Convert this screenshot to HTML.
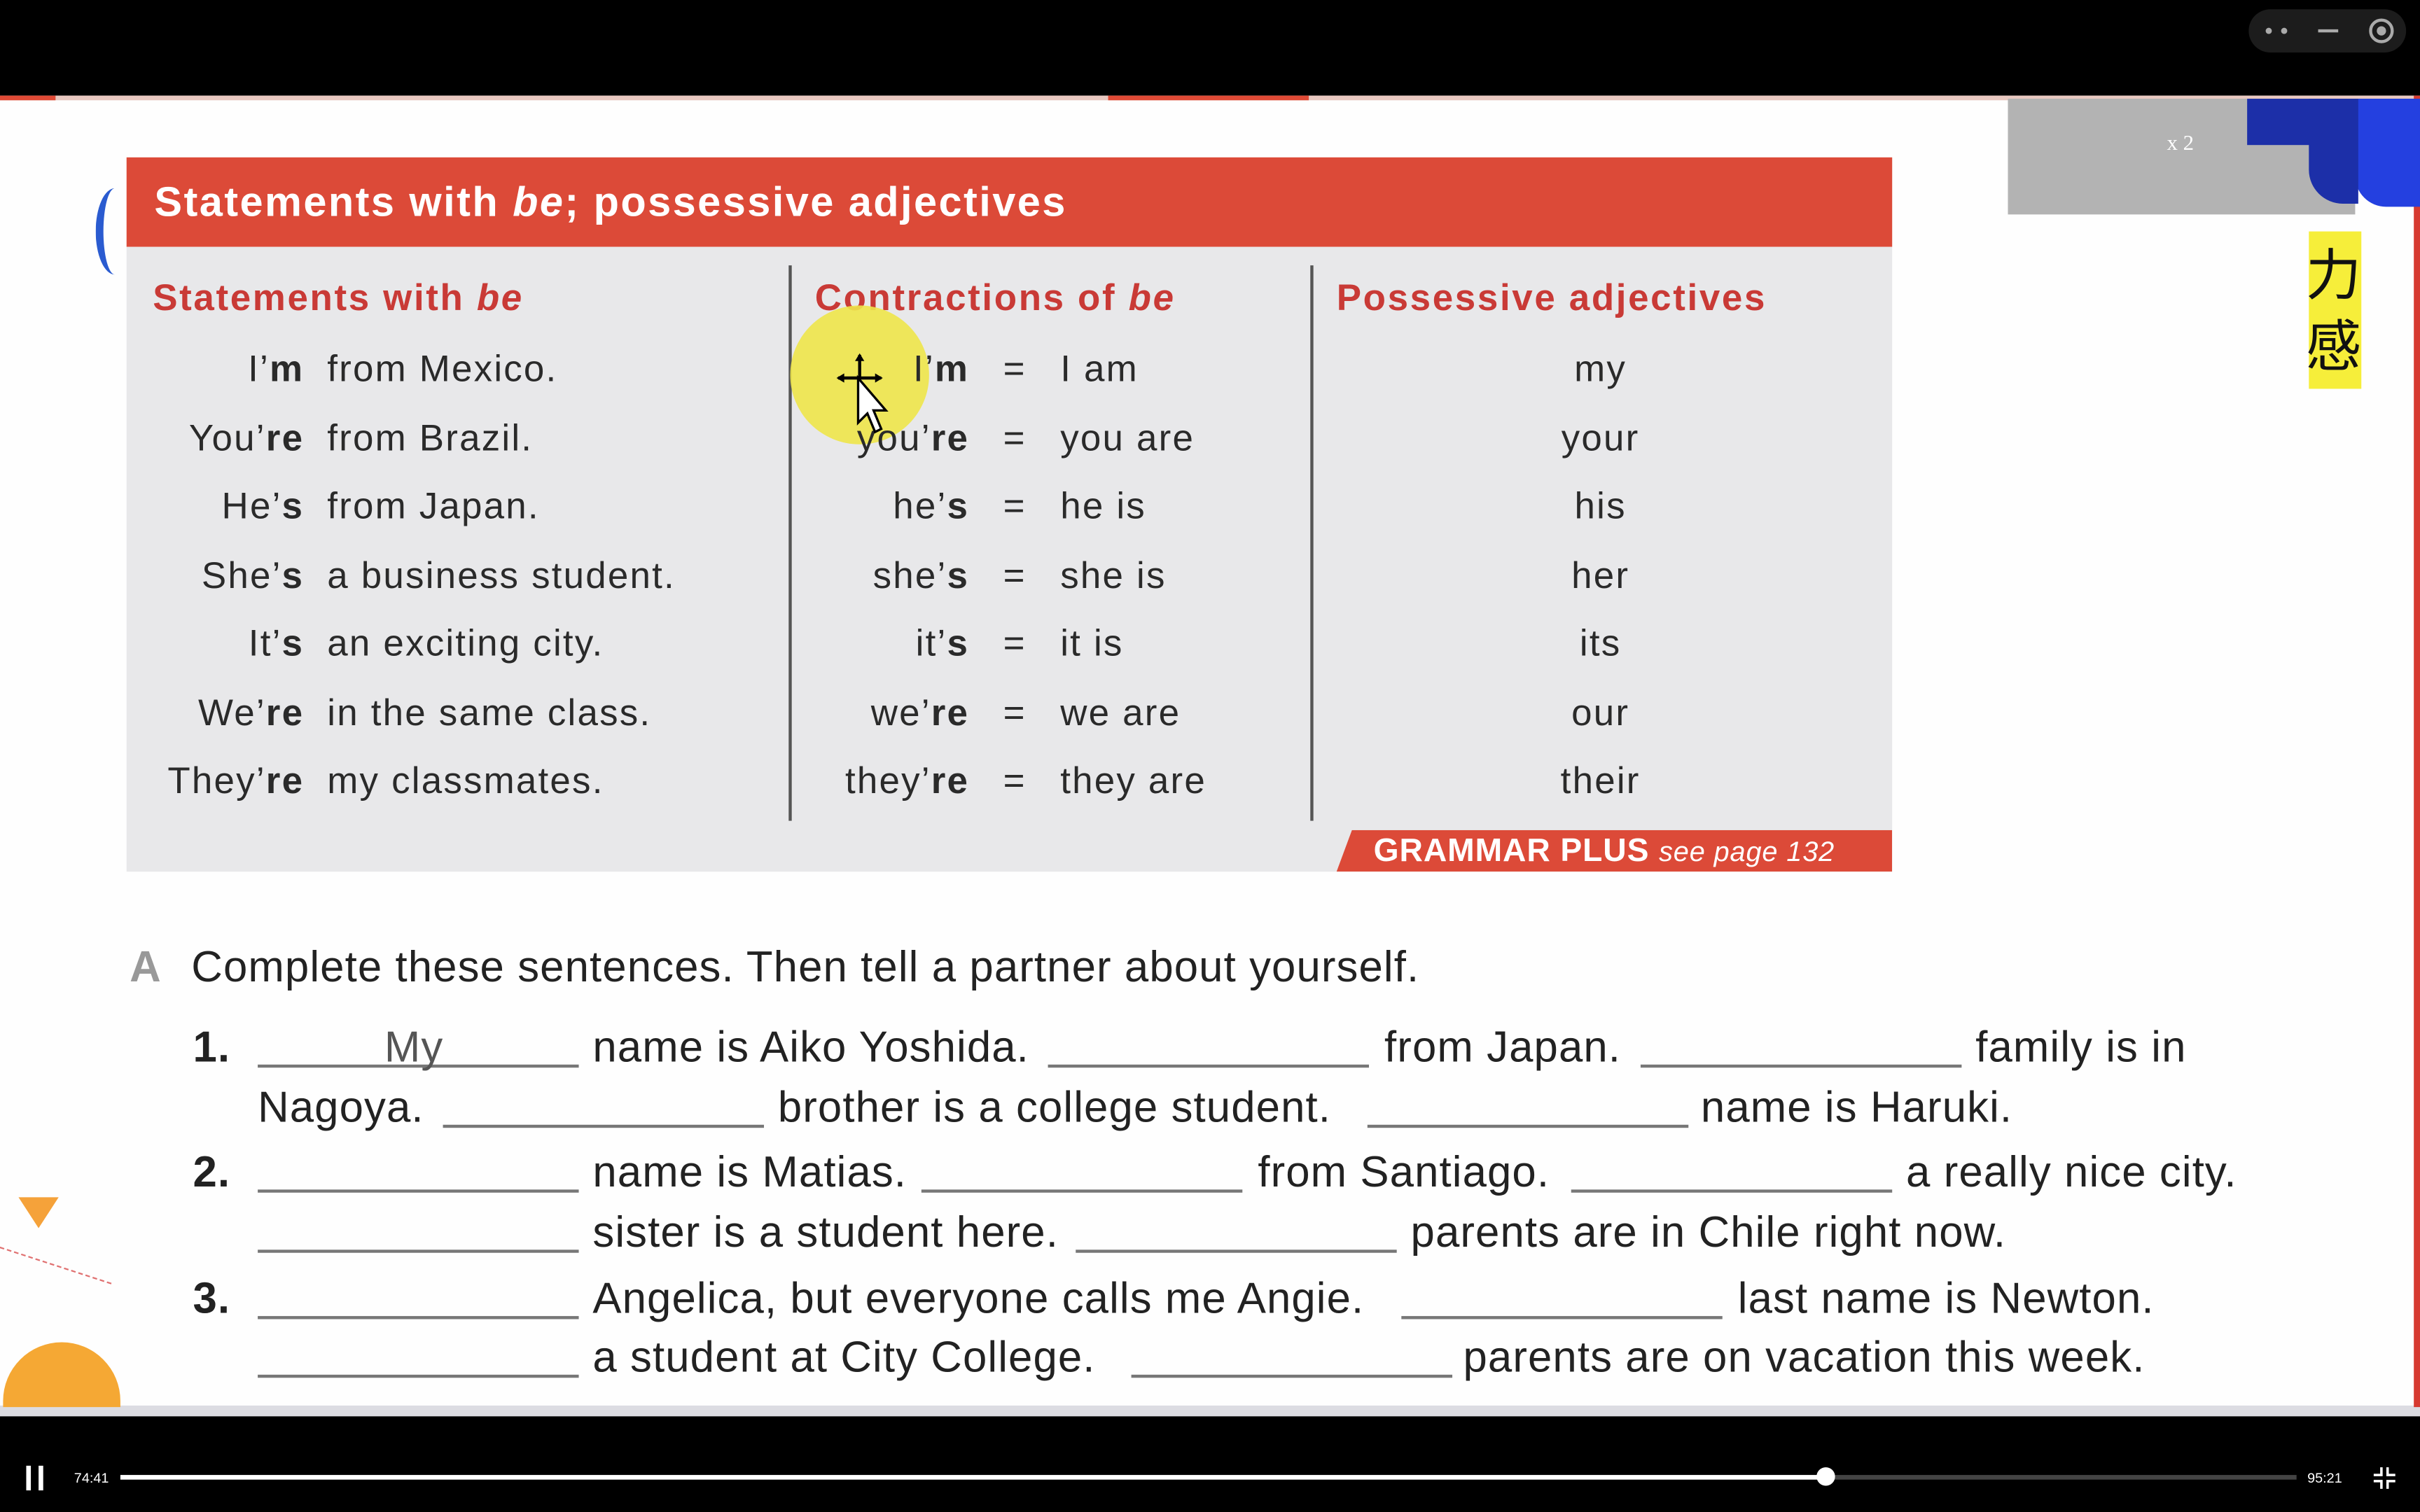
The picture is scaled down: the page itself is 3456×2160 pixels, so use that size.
<!DOCTYPE html>
<html><head><meta charset="utf-8"><style>
html,body{margin:0;padding:0;background:#000;overflow:hidden}
#w{position:absolute;left:0;top:0;width:1568px;height:980px;transform:scale(2.20408);transform-origin:0 0;background:#000;font-family:"Liberation Sans",sans-serif;}
.a{position:absolute;white-space:nowrap}
.t{font-size:24px;color:#2a2a2a;letter-spacing:1px;line-height:1}
.h{font-size:24px;color:#c93a36;font-weight:bold;letter-spacing:1.2px}
.e{font-size:28px;color:#222;letter-spacing:0.5px;line-height:1}
.bl{position:absolute;height:2px;background:#777}
.r{text-align:right}
</style></head><body><div id="w">
<div class="a" style="left:0;top:62px;width:1568px;height:850px;background:#fefefe"></div>
<div class="a" style="left:0;top:62px;width:1568px;height:3px;background:#e8c8c0"></div>
<div class="a" style="left:0;top:62px;width:36px;height:3px;background:#e04a36"></div>
<div class="a" style="left:718px;top:62px;width:130px;height:3px;background:#e04a36"></div>
<div class="a" style="left:0;top:911px;width:1568px;height:7px;background:#dcdce2"></div>
<div class="a" style="left:1564px;top:62px;width:4px;height:850px;background:#d63a30"></div>
<div class="a" style="left:1301px;top:64px;width:225px;height:75px;background:#b3b3b3"></div>
<div class="a" style="left:1526px;top:64px;width:42px;height:70px;background:#2440e0;border-bottom-left-radius:20px"></div>
<div class="a" style="left:1456px;top:64px;width:70px;height:30px;background:#1c2fa8"></div>
<div class="a" style="left:1496px;top:64px;width:32px;height:68px;background:#1c2fa8;border-bottom-left-radius:22px"></div>
<div class="a" style="left:1404px;top:86px;font-family:'Liberation Serif',serif;font-size:14px;color:#fff">x 2</div>
<div class="a" style="left:1496px;top:150px;width:34px;height:102px;background:#f6ee3a"></div>
<div class="a" style="left:1494px;top:156px;font-family:'Liberation Sans','Noto Sans CJK SC',sans-serif;font-size:36px;color:#111;line-height:46px">力<br>感</div>
<div class="a" style="left:62px;top:122px;width:20px;height:56px;border-left:5px solid #2a5bd0;border-radius:50% 0 0 50%"></div>
<div class="a" style="left:12px;top:776px;width:0;height:0;border-left:13px solid transparent;border-right:13px solid transparent;border-top:20px solid #f5a23a"></div>
<div class="a" style="left:0;top:808px;width:76px;height:30px;border-top:1px dashed #e07070;transform:rotate(18deg);transform-origin:0 0"></div>
<div class="a" style="left:2px;top:870px;width:76px;height:42px;background:#f5a834;border-radius:40px 40px 0 0"></div>
<div class="a" style="left:82px;top:102px;width:1144px;height:58px;background:#dc4a38"></div>
<div class="a" style="left:100px;top:116px;font-size:27px;font-weight:bold;color:#fff;letter-spacing:1.1px">Statements with <i>be</i>; possessive adjectives</div>
<div class="a" style="left:82px;top:160px;width:1144px;height:405px;background:#e8e8ea"></div>
<div class="a" style="left:511px;top:172px;width:2px;height:360px;background:#555"></div>
<div class="a" style="left:849px;top:172px;width:2px;height:360px;background:#555"></div>
<div class="a h" style="left:99px;top:180px">Statements with <i>be</i></div>
<div class="a h" style="left:528px;top:180px">Contractions of <i>be</i></div>
<div class="a h" style="left:866px;top:180px">Possessive adjectives</div>
<div class="a" style="left:512px;top:198px;width:90px;height:90px;border-radius:50%;background:#eee64a;opacity:.9"></div>
<div class="a t r" style="left:60px;width:137px;top:228px">I’<b>m</b></div><div class="a t" style="left:212px;top:228px">from Mexico.</div>
<div class="a t r" style="left:60px;width:137px;top:273px">You’<b>re</b></div><div class="a t" style="left:212px;top:273px">from Brazil.</div>
<div class="a t r" style="left:60px;width:137px;top:317px">He’<b>s</b></div><div class="a t" style="left:212px;top:317px">from Japan.</div>
<div class="a t r" style="left:60px;width:137px;top:362px">She’<b>s</b></div><div class="a t" style="left:212px;top:362px">a business student.</div>
<div class="a t r" style="left:60px;width:137px;top:406px">It’<b>s</b></div><div class="a t" style="left:212px;top:406px">an exciting city.</div>
<div class="a t r" style="left:60px;width:137px;top:451px">We’<b>re</b></div><div class="a t" style="left:212px;top:451px">in the same class.</div>
<div class="a t r" style="left:60px;width:137px;top:495px">They’<b>re</b></div><div class="a t" style="left:212px;top:495px">my classmates.</div>

<div class="a t r" style="left:500px;width:128px;top:228px">I’<b>m</b></div><div class="a t" style="left:650px;top:228px">=</div><div class="a t" style="left:687px;top:228px">I am</div>
<div class="a t r" style="left:500px;width:128px;top:273px">you’<b>re</b></div><div class="a t" style="left:650px;top:273px">=</div><div class="a t" style="left:687px;top:273px">you are</div>
<div class="a t r" style="left:500px;width:128px;top:317px">he’<b>s</b></div><div class="a t" style="left:650px;top:317px">=</div><div class="a t" style="left:687px;top:317px">he is</div>
<div class="a t r" style="left:500px;width:128px;top:362px">she’<b>s</b></div><div class="a t" style="left:650px;top:362px">=</div><div class="a t" style="left:687px;top:362px">she is</div>
<div class="a t r" style="left:500px;width:128px;top:406px">it’<b>s</b></div><div class="a t" style="left:650px;top:406px">=</div><div class="a t" style="left:687px;top:406px">it is</div>
<div class="a t r" style="left:500px;width:128px;top:451px">we’<b>re</b></div><div class="a t" style="left:650px;top:451px">=</div><div class="a t" style="left:687px;top:451px">we are</div>
<div class="a t r" style="left:500px;width:128px;top:495px">they’<b>re</b></div><div class="a t" style="left:650px;top:495px">=</div><div class="a t" style="left:687px;top:495px">they are</div>

<div class="a t" style="left:937px;width:200px;text-align:center;top:228px">my</div>
<div class="a t" style="left:937px;width:200px;text-align:center;top:273px">your</div>
<div class="a t" style="left:937px;width:200px;text-align:center;top:317px">his</div>
<div class="a t" style="left:937px;width:200px;text-align:center;top:362px">her</div>
<div class="a t" style="left:937px;width:200px;text-align:center;top:406px">its</div>
<div class="a t" style="left:937px;width:200px;text-align:center;top:451px">our</div>
<div class="a t" style="left:937px;width:200px;text-align:center;top:495px">their</div>
<svg class="a" style="left:540px;top:228px" width="40" height="58" viewBox="0 0 40 58">
<path d="M17 2 L17 32 M3 17 L31 17" stroke="#000" stroke-width="2"/>
<path d="M17 1 l-3 5 h6z M2 17 l5-3 v6z M32 17 l-5-3 v6z" fill="#000"/>
<path d="M16 17 L16 46 L22 40 L27 52 L31 50 L26 38 L34 38 Z" fill="#fff" stroke="#000" stroke-width="1.5"/>
</svg>
<div class="a" style="left:866px;top:538px;width:360px;height:27px;background:#dc4a38;clip-path:polygon(10px 0,100% 0,100% 100%,0 100%)"></div>
<div class="a" style="left:890px;top:540px;font-size:21px;font-weight:bold;color:#fff;letter-spacing:0.4px">GRAMMAR PLUS <i style="font-weight:normal;font-size:18px">see page 132</i></div>
<div class="a e" style="left:84px;top:613px;color:#999;font-weight:bold">A</div>
<div class="a e" style="left:124px;top:613px">Complete these sentences. Then tell a partner about yourself.</div>

<div class="a e" style="left:125px;top:665px;font-weight:bold">1.</div>
<div class="bl" style="left:167px;top:690px;width:208px"></div>
<div class="a e" style="left:249px;top:665px;color:#555">My</div>
<div class="a e" style="left:384px;top:665px">name is Aiko Yoshida.</div>
<div class="bl" style="left:679px;top:690px;width:208px"></div>
<div class="a e" style="left:897px;top:665px">from Japan.</div>
<div class="bl" style="left:1063px;top:690px;width:208px"></div>
<div class="a e" style="left:1280px;top:665px">family is in</div>
<div class="a e" style="left:167px;top:704px">Nagoya.</div>
<div class="bl" style="left:287px;top:729px;width:208px"></div>
<div class="a e" style="left:504px;top:704px">brother is a college student.</div>
<div class="bl" style="left:886px;top:729px;width:208px"></div>
<div class="a e" style="left:1102px;top:704px">name is Haruki.</div>

<div class="a e" style="left:125px;top:746px;font-weight:bold">2.</div>
<div class="bl" style="left:167px;top:771px;width:208px"></div>
<div class="a e" style="left:384px;top:746px">name is Matias.</div>
<div class="bl" style="left:597px;top:771px;width:208px"></div>
<div class="a e" style="left:815px;top:746px">from Santiago.</div>
<div class="bl" style="left:1018px;top:771px;width:208px"></div>
<div class="a e" style="left:1235px;top:746px">a really nice city.</div>
<div class="bl" style="left:167px;top:810px;width:208px"></div>
<div class="a e" style="left:384px;top:785px">sister is a student here.</div>
<div class="bl" style="left:697px;top:810px;width:208px"></div>
<div class="a e" style="left:914px;top:785px">parents are in Chile right now.</div>

<div class="a e" style="left:125px;top:828px;font-weight:bold">3.</div>
<div class="bl" style="left:167px;top:853px;width:208px"></div>
<div class="a e" style="left:384px;top:828px">Angelica, but everyone calls me Angie.</div>
<div class="bl" style="left:908px;top:853px;width:208px"></div>
<div class="a e" style="left:1126px;top:828px">last name is Newton.</div>
<div class="bl" style="left:167px;top:891px;width:208px"></div>
<div class="a e" style="left:384px;top:866px">a student at City College.</div>
<div class="bl" style="left:733px;top:891px;width:208px"></div>
<div class="a e" style="left:948px;top:866px">parents are on vacation this week.</div>

<div class="a" style="left:1457px;top:6px;width:102px;height:28px;border-radius:14px;background:#1c1c1c"></div>
<div class="a" style="left:1468px;top:18px;width:14px;height:4px;border-top:4px dotted #aaa"></div>
<div class="a" style="left:1502px;top:19px;width:13px;height:2px;background:#aaa"></div>
<div class="a" style="left:1535px;top:12px;width:12px;height:12px;border:2px solid #aaa;border-radius:50%"></div>
<div class="a" style="left:1540px;top:17px;width:6px;height:6px;background:#aaa;border-radius:50%"></div>
<div class="a" style="left:17px;top:950px;width:3px;height:16px;background:#fff"></div>
<div class="a" style="left:25px;top:950px;width:3px;height:16px;background:#fff"></div>
<div class="a" style="left:48px;top:953px;font-size:9px;color:#fff">74:41</div>
<div class="a" style="left:78px;top:956px;width:1410px;height:3px;background:#444"></div>
<div class="a" style="left:78px;top:956px;width:1105px;height:3px;background:#fff"></div>
<div class="a" style="left:1177px;top:951px;width:12px;height:12px;background:#fff;border-radius:50%"></div>
<div class="a" style="left:1495px;top:953px;font-size:9px;color:#fff">95:21</div>
<svg class="a" style="left:1537px;top:950px" width="16" height="16" viewBox="0 0 16 16"><path d="M6 1v5H1M10 1v5h5M6 15v-5H1M10 15v-5h5" stroke="#fff" stroke-width="1.6" fill="none"/></svg>
</div></body></html>
